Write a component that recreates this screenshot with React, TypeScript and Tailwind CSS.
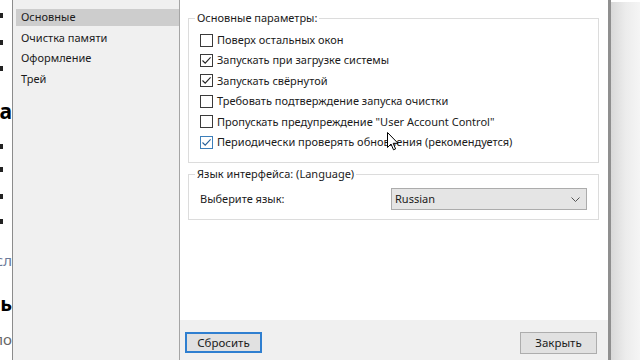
import React from 'react';

type Option = { label: string; checked: boolean; hover?: boolean };

const options: Option[] = [
  { label: 'Поверх остальных окон', checked: false },
  { label: 'Запускать при загрузке системы', checked: true },
  { label: 'Запускать свёрнутой', checked: true },
  { label: 'Требовать подтверждение запуска очистки', checked: false },
  { label: 'Пропускать предупреждение "User Account Control"', checked: false },
  { label: 'Периодически проверять обновления (рекомендуется)', checked: true, hover: true },
];

const menu = ['Основные', 'Очистка памяти', 'Оформление', 'Трей'];

const CheckBox = ({ checked, hover }: { checked: boolean; hover?: boolean }) => (
  <div
    className={
      hover
        ? 'w-[13px] h-[13px] shrink-0 border border-[#3d7fba] bg-white'
        : 'w-[13px] h-[13px] shrink-0 border border-[#3a3a3a] bg-white'
    }
  >
    {checked && (
      <svg viewBox="0 0 11 11" className="w-[11px] h-[11px]">
        <path
          d="M1.5 5.5 L4.2 8.2 L9.6 2.4"
          fill="none"
          stroke={hover ? '#245f99' : '#222'}
          strokeWidth="1.1"
        />
      </svg>
    )}
  </div>
);

const Btn = ({ label, focused }: { label: string; focused?: boolean }) => (
  <button
    className={
      focused
        ? 'w-[77px] h-[21px] bg-[#e1e1e1] border-2 border-[#2f7fd0] text-[11.5px] leading-none'
        : 'w-[77px] h-[22px] bg-[#e1e1e1] border border-[#adadad] text-[11.5px] leading-none'
    }
  >
    {label}
  </button>
);

// обрезанный кусок страницы за окном
const BackdropEdge = () => (
  <div className="w-[12px] shrink-0 bg-white overflow-hidden flex flex-col text-black">
    <div className="mt-[13px] w-[3px] h-[5px] bg-[#222]" />
    <div className="mt-[22px] w-[3px] h-[5px] bg-[#222]" />
    <div className="mt-[21px] w-[3px] h-[5px] bg-[#222]" />
    <div className="mt-[28px] h-[24px] flex justify-end whitespace-nowrap text-[21px] font-bold leading-[24px]">
      Настройка
    </div>
    <div className="mt-[21px] w-[3px] h-[5px] bg-[#222]" />
    <div className="mt-[18px] w-[3px] h-[5px] bg-[#222]" />
    <div className="mt-[22px] w-[3px] h-[5px] bg-[#222]" />
    <div className="mt-[20px] w-[3px] h-[5px] bg-[#222]" />
    <div className="mt-[27px] h-[18px] flex justify-end whitespace-nowrap text-[15px] leading-[18px] text-[#6b7a99]">
      Ссылка на сл
    </div>
    <div className="mt-[24px] h-[22px] flex justify-end whitespace-nowrap text-[20px] font-bold leading-[22px]">
      Отзывь
    </div>
    <div className="mt-[15px] h-[18px] flex justify-end whitespace-nowrap text-[15px] leading-[18px] text-[#666]">
      Было
    </div>
  </div>
);

export default function App() {
  return (
    <div
      className="relative w-[640px] h-[360px] overflow-hidden flex bg-white text-[11px] text-[#1b1b1b]"
      style={{ fontFamily: '"Noto Sans", "Open Sans", sans-serif' }}
    >
      <BackdropEdge />

      {/* окно настроек */}
      <div className="flex border-l border-[#8c8c8c] border-r-[3px] border-r-[#8f8f8f]">
        <div className="w-[167px] shrink-0 bg-[#f0f0f0] border-r border-[#a5a5a5] pt-[9px] pl-[3px] flex flex-col gap-[3.5px]">
          {menu.map((m, i) => (
            <div
              key={m}
              className={
                i === 0
                  ? 'h-[17px] pl-[5px] flex items-center bg-[#cdcdcd]'
                  : 'h-[17px] pl-[5px] flex items-center'
              }
            >
              {m}
            </div>
          ))}
        </div>

        <div className="w-[428px] flex flex-col">
          <div className="h-[320px] bg-white pt-[10px] pl-[8px]">
            <fieldset className="w-[411px] border border-[#dcdcdc] pl-[6px] pb-[10px]">
              <legend className="px-[2px] h-[16px] leading-[16px]">Основные параметры:</legend>
              <div className="mt-[4px] pl-[5px] flex flex-col">
                {options.map((o) => (
                  <div key={o.label} className="h-[20.4px] flex items-center gap-[4px] whitespace-nowrap">
                    <CheckBox checked={o.checked} hover={o.hover} />
                    <span>{o.label}</span>
                  </div>
                ))}
              </div>
            </fieldset>

            <fieldset className="mt-[3px] w-[411px] border border-[#dcdcdc] pl-[6px] pb-[9px]">
              <legend className="px-[2px] h-[16px] leading-[16px]">Язык интерфейса: (Language)</legend>
              <div className="mt-[6px] pl-[5px] flex items-center">
                <span className="w-[191px]">Выберите язык:</span>
                <div className="w-[196px] h-[22px] bg-[#e5e5e5] border border-[#acacac] flex items-center justify-between pl-[3px] pr-[6px]">
                  <span>Russian</span>
                  <svg viewBox="0 0 9 5" className="w-[9px] h-[5px]">
                    <path d="M0.5 0.5 L4.5 4.5 L8.5 0.5" fill="none" stroke="#555" strokeWidth="1" />
                  </svg>
                </div>
              </div>
            </fieldset>
          </div>

          <div className="flex-1 bg-[#f0f0f0] flex items-start justify-between pl-[5px] pr-[11px] pt-[12px]">
            <Btn label="Сбросить" focused />
            <Btn label="Закрыть" />
          </div>
        </div>
      </div>

      <div className="flex-1 border-t-[2px] border-white bg-gradient-to-r from-[#d9d9d9] via-[#ececec] to-[#f5f5f5]" />

      {/* курсор мыши */}
      <svg
        viewBox="0 0 12 19"
        className="absolute left-[387px] top-[132px] w-[12px] h-[19px]"
      >
        <path
          d="M0.5 0.5 L0.5 15.5 L4 12 L6.5 17.8 L8.6 16.9 L6.2 11.3 L11 11.3 Z"
          fill="#fff"
          stroke="#000"
          strokeWidth="1"
          strokeLinejoin="round"
        />
      </svg>
    </div>
  );
}
